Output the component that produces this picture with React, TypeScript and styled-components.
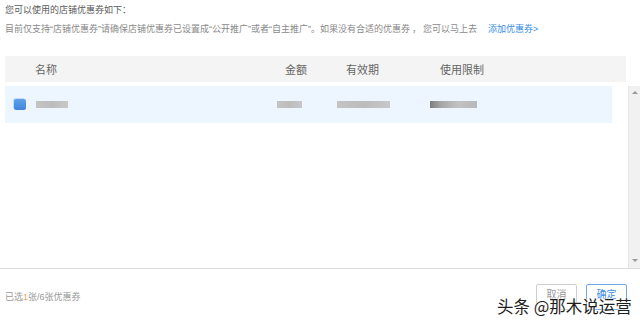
import React from "react";
import styled, { createGlobalStyle } from "styled-components";

const GlobalStyle = createGlobalStyle`
  html, body {
    margin: 0;
    padding: 0;
    background: #ffffff;
  }
  body {
    font-family: "Liberation Sans", "Noto Sans CJK SC", sans-serif;
  }
`;

const Page = styled.div`
  position: relative;
  width: 640px;
  height: 323px;
  display: flex;
  flex-direction: column;
  overflow: hidden;
  background: #fff;
`;

const Title = styled.div`
  height: 20px;
  line-height: 20px;
  padding-left: 5px;
  font-size: 9px;
  color: #5a5a5a;
`;

const Notice = styled.div`
  height: 18px;
  line-height: 18px;
  padding-left: 5px;
  font-size: 9px;
  color: #8a8a8a;
  white-space: nowrap;
`;

const Comma = styled.span`
  margin: 0 2px;
`;

const AddLink = styled.a`
  margin-left: 11px;
  color: #3a8ee6;
  text-decoration: none;
`;

const Header = styled.div`
  margin: 18px 14px 0 5px;
  height: 26px;
  display: grid;
  grid-template-columns: 272px 60px 93px 1fr;
  align-items: center;
  background: #f4f4f4;
  font-size: 11px;
  color: #666;
`;

const HeaderCell = styled.div<{ $indent: number }>`
  padding-left: ${(p) => p.$indent}px;
`;

const Body = styled.div`
  margin-top: 4px;
  height: 182px;
  display: flex;
`;

const List = styled.div`
  flex: 1;
  margin: 0 16px 0 5px;
`;

const Row = styled.div`
  height: 37px;
  display: grid;
  grid-template-columns: 272px 60px 93px 1fr;
  align-items: center;
  background: #edf6ff;
`;

const NameCell = styled.div`
  display: flex;
  align-items: center;
  gap: 10px;
  padding-left: 9px;
`;

const Check = styled.span`
  width: 12px;
  height: 11px;
  border-radius: 2px;
  background: linear-gradient(180deg, #5ea0ea 0%, #3f86dc 100%);
  box-shadow: -1px -1px 0 #c3dcf6;
  filter: blur(0.3px);
`;

const Redacted = styled.span<{ $w: number; $dark?: boolean }>`
  display: block;
  width: ${(p) => p.$w}px;
  height: 7px;
  background: ${(p) =>
    p.$dark
      ? "linear-gradient(90deg, #7e7e7e 0%, #a8a8a8 25%, #c2c2c2 60%, #b8b8b8 100%)"
      : "linear-gradient(90deg, #c4c4c4, #bcbcbc 50%, #c8c8c8)"};
  filter: blur(0.5px);
`;

const Scrollbar = styled.div`
  width: 11px;
  background: #f1f1f1;
  border-left: 1px solid #e6e6e6;
  display: flex;
  flex-direction: column;
  justify-content: space-between;
  align-items: center;
  padding: 5px 0 6px;
`;

const Arrow = styled.span<{ $down?: boolean }>`
  width: 0;
  height: 0;
  border-left: 3px solid transparent;
  border-right: 3px solid transparent;
  ${(p) =>
    p.$down
      ? "border-top: 3px solid #9a9a9a;"
      : "border-bottom: 3px solid #9a9a9a;"}
`;

const Divider = styled.div`
  height: 1px;
  background: #dcdcdc;
`;

const Footer = styled.div`
  flex: 1;
  display: flex;
  align-items: center;
  justify-content: space-between;
  padding: 0 13px 0 5px;
`;

const Selected = styled.span`
  font-size: 9px;
  color: #999;
`;

const Count = styled.span`
  color: #f0a050;
`;

const Buttons = styled.div`
  display: flex;
  gap: 9px;
  margin-top: 1px;
`;

const Button = styled.button<{ $primary?: boolean }>`
  width: 41px;
  height: 26px;
  padding: 0 0 7px;
  font-family: inherit;
  font-size: 10px;
  background: #fff;
  border-radius: 2px;
  border: 1px solid ${(p) => (p.$primary ? "#6fa6e6" : "#cfcfcf")};
  color: ${(p) => (p.$primary ? "#3a8ee6" : "#999")};
`;

const Watermark = styled.div`
  position: absolute;
  left: 497px;
  top: 296px;
  font-family: "Noto Sans CJK SC", sans-serif;
  font-size: 16.5px;
  line-height: 20px;
  color: #1e1e1e;
  white-space: nowrap;
  text-shadow: 0 0 2px #fff, 0 0 2px #fff, 0 0 1px #fff;
`;

export default function App() {
  return (
    <Page>
      <GlobalStyle />
      <Title>您可以使用的店铺优惠券如下：</Title>
      <Notice>
        目前仅支持“店铺优惠券”请确保店铺优惠券已设置成“公开推广”或者“自主推广”。如果没有合适的优惠券
        <Comma>，</Comma>您可以马上去
        <AddLink href="#">添加优惠券&gt;</AddLink>
      </Notice>
      <Header>
        <HeaderCell $indent={30}>名称</HeaderCell>
        <HeaderCell $indent={8}>金额</HeaderCell>
        <HeaderCell $indent={9}>有效期</HeaderCell>
        <HeaderCell $indent={10}>使用限制</HeaderCell>
      </Header>
      <Body>
        <List>
          <Row>
            <NameCell>
              <Check />
              <Redacted $w={32} />
            </NameCell>
            <div>
              <Redacted $w={25} />
            </div>
            <div>
              <Redacted $w={53} />
            </div>
            <div>
              <Redacted $w={47} $dark />
            </div>
          </Row>
        </List>
        <Scrollbar>
          <Arrow />
          <Arrow $down />
        </Scrollbar>
      </Body>
      <Divider />
      <Footer>
        <Selected>
          已选<Count>1</Count>张/6张优惠券
        </Selected>
        <Buttons>
          <Button>取消</Button>
          <Button $primary>确定</Button>
        </Buttons>
      </Footer>
      <Watermark>头条 @那木说运营</Watermark>
    </Page>
  );
}
